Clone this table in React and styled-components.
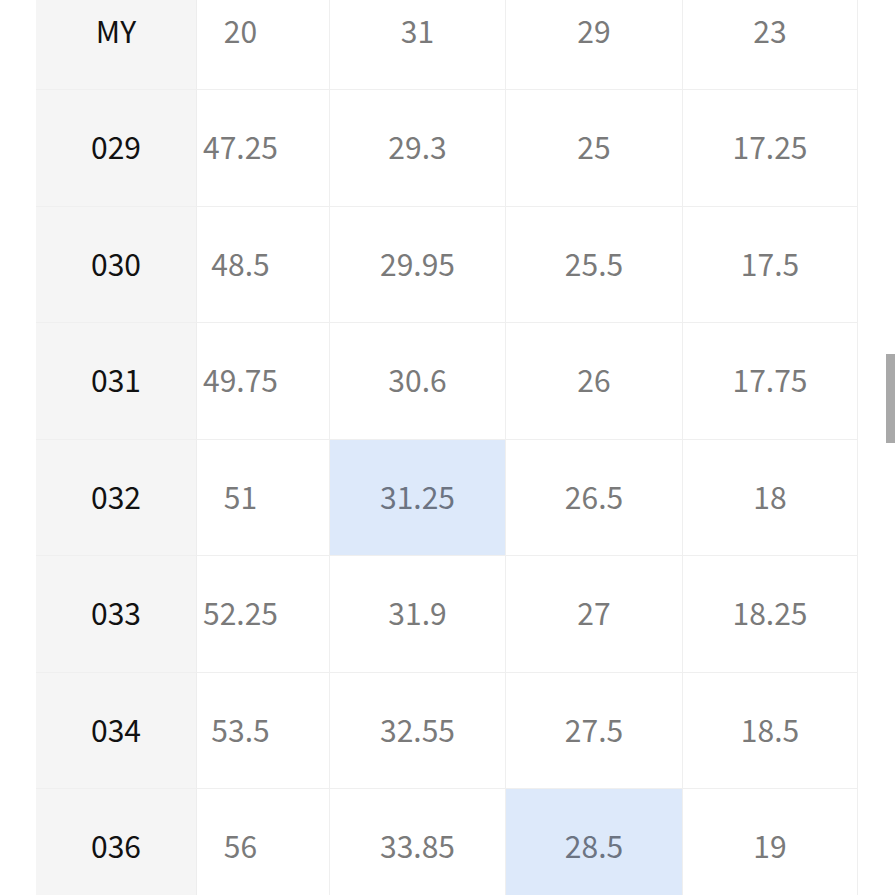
import React from 'react';
import styled, { createGlobalStyle, css } from 'styled-components';

const GlobalStyle = createGlobalStyle`
  html, body {
    margin: 0;
    padding: 0;
    background: #fff;
  }
  body {
    font-family: "Noto Sans CJK KR", "Noto Sans", sans-serif;
  }
`;

const Viewport = styled.div`
  height: 895px;
  overflow: hidden;
  position: relative;
`;

const Table = styled.div`
  display: grid;
  grid-template-columns: 161px 133px 176px 177px 175px;
  grid-auto-rows: 116.5px;
  margin: -26.5px 0 0 36px;
  width: 822px;
`;

const Cell = styled.div`
  box-sizing: border-box;
  display: flex;
  align-items: center;
  justify-content: center;
  padding-bottom: 3px;
  border-bottom: 1px solid #efefef;
  border-right: 1px solid #efefef;
  font-size: 30px;
  line-height: 1;
  color: #7a7a7a;
  background: #fff;

  ${(p) => p.$label && css`
    background: #f5f5f5;
    color: #111;
    border-right-color: #ededed;
  `}

  ${(p) => p.$narrow && css`
    padding-right: 45px;
  `}

  ${(p) => p.$hit && css`
    background: #dde9fa;
    color: #6c7482;
  `}
`;

const ScrollThumb = styled.div`
  position: absolute;
  right: 0;
  top: 354px;
  width: 9px;
  height: 89px;
  background: #a9a9a9;
`;

const rows = [
  { size: 'MY', values: ['20', '31', '29', '23'] },
  { size: '029', values: ['47.25', '29.3', '25', '17.25'] },
  { size: '030', values: ['48.5', '29.95', '25.5', '17.5'] },
  { size: '031', values: ['49.75', '30.6', '26', '17.75'] },
  { size: '032', values: ['51', '31.25', '26.5', '18'], hit: 1 },
  { size: '033', values: ['52.25', '31.9', '27', '18.25'] },
  { size: '034', values: ['53.5', '32.55', '27.5', '18.5'] },
  { size: '036', values: ['56', '33.85', '28.5', '19'], hit: 2 },
];

const App = () => (
  <Viewport>
    <GlobalStyle />
    <Table>
      {rows.map((row) => (
        <React.Fragment key={row.size}>
          <Cell $label>{row.size}</Cell>
          {row.values.map((v, i) => (
            <Cell key={i} $narrow={i === 0} $hit={row.hit === i}>
              {v}
            </Cell>
          ))}
        </React.Fragment>
      ))}
    </Table>
    <ScrollThumb />
  </Viewport>
);

export default App;
